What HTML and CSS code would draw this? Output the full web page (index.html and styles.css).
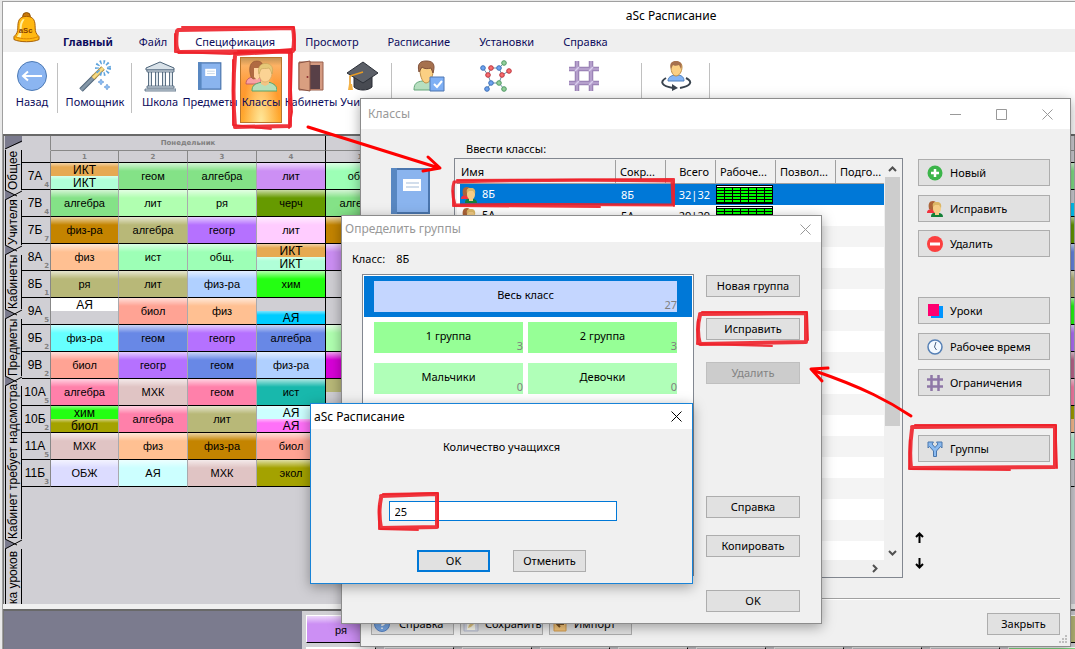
FILE: index.html
```html
<!DOCTYPE html>
<html lang="ru">
<head>
<meta charset="utf-8">
<title>aSc Расписание</title>
<link rel="stylesheet" href="styles.css">
</head>
<body>
<svg class="defs" aria-hidden="true">
  <symbol id="people" viewBox="0 0 32 32">
    <path d="M1 24c0-5 3-6 7-7.500l8 1v6.500H1z" fill="#f9a0a3" stroke="#c55f65"/>
    <path d="M6 17C3 8 5 1 12 1c6 0 7 5 7 14l-5 3-6 1z" fill="#b06a42" stroke="#8c5232" stroke-width=".6"/>
    <path d="M9 8h6v9l-3 3-3-3z" fill="#ffd3a0"/>
    <path d="M7 31c0-6 3-7 8-8.500h10c4 1.500 7 3 7 8.500z" fill="#b7dfb9" stroke="#5aa468"/>
    <path d="M16 18h8v6l-4 2-4-2z" fill="#f3c483"/>
    <path d="M14 12c0-6 3-8 6-8s7 2 7 8c0 7-4 10-7 10s-6-3-6-10z" fill="#fbd394" stroke="#d0a35f" stroke-width=".6"/>
    <path d="M14 14c-2-7 2-11 7-10.500 5 0 8 4 6 10.500-1-3-2-5-3-6-3 1-6 0-8 1z" fill="#e6c878" stroke="#c2a259" stroke-width=".6"/>
  </symbol>
  <symbol id="people-small" viewBox="0 0 16 16">
    <path d="M0 12c0-3 2-4 5-4l3 1v3z" fill="#f2323e"/>
    <path d="M2 8C1 3 2 0 6 0c4 0 4 4 3 8l-4 1z" fill="#ad6438"/>
    <path d="M4 16c0-4 2-4 4-4h4c2 0 4 1 4 4z" fill="#138038"/>
    <path d="M6 6c0-4 1-5 4-5s4 2 4 6c0 3-1 4-2 5v2H8v-2C6 10 6 9 6 6z" fill="#f5cd86"/>
    <path d="M6 6c-1-4 1-5 4-5s5 2 4 6l-2-3-4 0z" fill="#dcb766"/>
  </symbol>
  <symbol id="book" viewBox="0 0 40 46">
    <path d="M1 1h37v44H1z" fill="#8ab4ee" stroke="#4a75ad" stroke-width="2"/>
    <path d="M0 0h6v46H0z" fill="#5887c1"/>
    <path d="M12 11h18v12H12z" fill="#fff"/>
    <path d="M15 15h13M15 19h13" stroke="#a5bdd9"/>
  </symbol>
  <symbol id="hash" viewBox="0 0 30 30">
    <path d="M8 0v30M22 0v30M0 8h30M0 22h30" stroke="#957bb0" stroke-width="4.500" fill="none"/>
    <path d="M8 0v30M22 0v30M0 8h30M0 22h30" stroke="#b5a0cc" stroke-width="2.500" fill="none"/>
    <path d="M6 10l4-4M20 10l4-4M6 24l4-4M20 24l4-4" stroke="#d8ccec" stroke-width="1.500"/>
  </symbol>
  <symbol id="close" viewBox="0 0 11 11"><path d="M.5.5l10 10M10.500.5l-10 10" stroke="currentColor" fill="none"/></symbol>
  <pattern id="slots" width="8" height="3" x="1" y="3" patternUnits="userSpaceOnUse"><path d="M0 0h7v2H0z" fill="#0f0"/></pattern>
  <symbol id="grid-time" viewBox="0 0 57 19">
    <path d="M0 0h57v19H0z"/><path d="M1 1h55v1H1z" fill="#fff"/><path d="M1 3h55v15H1z" fill="url(#slots)"/>
  </symbol>
</svg>

<main class="app">
  <header class="app-title">
    <svg class="bell" viewBox="0 0 28 31"><path d="M10 4a4 4 0 0 1 8 0l-2 3h-4z" fill="#c87808" stroke="#8a4e00"/><path d="M14 4c-8 0-9 5-9 12 0 4-1 6-4 9v3c6 3 20 3 26 0v-3c-3-3-4-5-4-9 0-7-1-12-9-12z" fill="#ffb812" stroke="#a65c00"/><path d="M10 7c-2 2-3 5-3 9s-1 6-3 9l4 1c1-3 1-6 1-10 0-3 1-6 3-9z" fill="#fff0a0"/><path d="M2 25c7 3 17 3 24 0" stroke="#d98300" fill="none"/><text x="6" y="21" class="bell-text">aSc</text></svg>
    <h1>aSc Расписание</h1>
  </header>
  <nav class="tabs">
    <a href="#" class="tab main">Главный</a><a href="#" class="tab">Файл</a><a href="#" class="tab active">Спецификация</a><a href="#" class="tab">Просмотр</a><a href="#" class="tab">Расписание</a><a href="#" class="tab">Установки</a><a href="#" class="tab">Справка</a>
  </nav>
  <div class="ribbon">
    <button class="tool w44"><svg viewBox="0 0 32 32"><circle cx="16" cy="16" r="14.500" fill="#8bb5f1" stroke="#4d7ab5"/><path d="M26 16H8M12 11.500L7 16l5 4.500" stroke="#fff" stroke-width="2" fill="none"/></svg>Назад</button>
    <span class="sep"></span>
    <button class="tool w66"><svg viewBox="0 0 32 32"><path d="M2 30L16 16" stroke="#4f6478" stroke-width="5"/><path d="M2 30L16 16" stroke="#8497a8" stroke-width="3"/><path d="M14 18l10-10" stroke="#aa8d42" stroke-width="5"/><path d="M14 18l10-10" stroke="#f8db83" stroke-width="3"/><circle cx="24" cy="8" r="6" fill="none" stroke="#5da3dd" stroke-width="4" stroke-dasharray="1.500 2"/><path d="M22 19l1 2 2 1-2 1-1 2-1-2-2-1 2-1zM28 24l1 2 2 1-2 1-1 2-1-2-2-1 2-1z" fill="#8bbcf3" stroke="#4f87ca" stroke-width=".5"/></svg>Помощник</button>
    <span class="sep"></span>
    <button class="tool w48"><svg viewBox="0 0 32 32"><path d="M2 8l14-6 14 6v2H2z" fill="#d9e2e9" stroke="#4c6378"/><path d="M6 12v14M13 12v14M20 12v14M27 12v14" stroke="#5b7084" stroke-width="4"/><path d="M6 12v14M13 12v14M20 12v14M27 12v14" stroke="#dfe7ed" stroke-width="2"/><path d="M3 10h27v2H3zM3 26h27v2H3zM1 29h31v2H1z" fill="#d7e0e7" stroke="#4c6378" stroke-width=".8"/></svg>Школа</button>
    <button class="tool w52"><svg viewBox="0 0 32 32"><use href="#book" x="4" y="2" width="24" height="28"/></svg>Предметы</button>
    <button class="tool w50 chosen"><svg viewBox="0 0 32 32"><use href="#people" width="32" height="32"/></svg>Классы</button>
    <button class="tool w50"><svg viewBox="0 0 32 32"><path d="M4 2h24v28H4z" fill="#d49a81" stroke="#9a604d"/><path d="M8 5h17v24H8z" fill="#584047"/><path d="M4 3l11-2v30L4 29z" fill="#d99f80" stroke="#8a5544"/><circle cx="12.500" cy="17" r="1" fill="#8c2d30"/></svg>Кабинеты</button>
    <button class="tool w52"><svg viewBox="0 0 32 32"><path d="M8 15h18v12c-4 4-14 4-18 0z" fill="#484b52" stroke="#292c34"/><path d="M1 13L17 2l15 11-15 10z" fill="#5c6068" stroke="#2c3038"/><path d="M17 12L4 16v10" fill="none" stroke="#e79b23" stroke-width="1.500"/><path d="M3 24h3l1 6H2z" fill="#f5b244"/></svg>Учителя</button>
    <span class="sep"></span>
    <button class="tool w66" aria-label="Ученики"><svg viewBox="0 0 32 32"><path d="M1 30c0-7 3-8 8-9h8c4 1 7 3 7 9z" fill="#b7dfc0" stroke="#66a77b"/><path d="M7 10c0-6 3-7 6-7s7 1 7 8c0 7-4 12-7 12s-6-6-6-13z" fill="#fbd083" stroke="#bf9048"/><path d="M6 12C4 4 7 1 13 1s10 2 7 12l-2-5c-3 1-7 1-9-1z" fill="#a6714e" stroke="#81513b"/><path d="M17 17h14v14H17z" fill="#7fb0f5" stroke="#5078b4"/><path d="M21 24l3 3 5-6" stroke="#fff" stroke-width="2" fill="none"/></svg></button>
    <button class="tool w68" aria-label="Связи"><svg viewBox="0 0 32 32"><path d="M3 8l5 7 3 8-4 6M8 15l3-7M19 8l5-5M19 8l3 7 7-4M22 15l-3 8 5 6M11 23h8M11 8h8" stroke="#6990a6" fill="none"/><g fill="#6ea4f0" stroke="#3e70b8"><circle cx="3" cy="8" r="2.300"/><circle cx="19" cy="8" r="2.300"/><circle cx="11" cy="23" r="2.300"/><circle cx="7" cy="29" r="2.300"/></g><g fill="#f66d6d" stroke="#bd333e"><circle cx="11" cy="8" r="2.300"/><circle cx="8" cy="15" r="2.300"/><circle cx="22" cy="15" r="2.300"/><circle cx="29" cy="11" r="2.300"/></g><g fill="#94cf9b" stroke="#509a65"><circle cx="24" cy="3" r="2.300"/><circle cx="19" cy="23" r="2.300"/><circle cx="24" cy="29" r="2.300"/></g></svg></button>
    <button class="tool w110" aria-label="Сетка"><svg viewBox="0 0 32 32"><use href="#hash" x="1" y="1" width="30" height="30"/></svg></button>
    <span class="sep"></span>
    <button class="tool w60" aria-label="Обмен"><svg viewBox="0 0 32 32"><path d="M8 21c0-4 3-5 6-6h5c3 1 5 2 5 6z" fill="#84b5f5" stroke="#4f7fbc"/><path d="M11 7c0-5 3-5 5-5s6 0 6 5c0 5-3 9-6 9s-5-4-5-9z" fill="#fbd083" stroke="#bf9048"/><path d="M11 9C9 3 12 1 16 1s7 2 5 8l-2-4c-2 1-5 1-6 0z" fill="#a6714e"/><path d="M6 18c-7 4-4 8 7 10M26 18c8 4 4 8-6 10" fill="none" stroke="#39434e" stroke-width="2"/><path d="M12 24l6 4-6 3z" fill="#39434e"/></svg></button>
    <span class="sep"></span>
  </div>

  <section class="workspace">
    <div class="side-tabs">
      <svg class="notch first" viewBox="0 0 18 14"><path d="M0 0h17v6L0 13z"/><path d="M17 5L0 13" class="edge"/></svg>
      <button class="side-tab s1">Общее</button>
      <svg class="notch" viewBox="0 0 18 10"><path d="M0 0l10 5-10 5z"/><path d="M0 0l12 6M0 10L17 1" class="edge"/></svg>
      <button class="side-tab s2">Учителя</button>
      <svg class="notch" viewBox="0 0 18 10"><path d="M0 0l10 5-10 5z"/><path d="M0 0l12 6M0 10L17 1" class="edge"/></svg>
      <button class="side-tab s3">Кабинеты</button>
      <svg class="notch" viewBox="0 0 18 10"><path d="M0 0l10 5-10 5z"/><path d="M0 0l12 6M0 10L17 1" class="edge"/></svg>
      <button class="side-tab s4">Предметы</button>
      <svg class="notch" viewBox="0 0 18 10"><path d="M0 0l10 5-10 5z"/><path d="M0 0l12 6M0 10L17 1" class="edge"/></svg>
      <button class="side-tab s5">Кабинет требует надсмотра</button>
      <svg class="notch" viewBox="0 0 18 10"><path d="M0 0l10 5-10 5z"/><path d="M0 0l12 6M0 10L17 1" class="edge"/></svg>
      <button class="side-tab s6">ка уроков</button>
    </div>
    <table class="plan">
      <colgroup><col class="c-head"><col class="c-first"><col class="c-slot"><col class="c-slot"><col class="c-slot"><col class="c-slot"><col><col class="c-last"></colgroup>
      <thead>
        <tr class="days"><th></th><th colspan="4" class="day-end">Понедельник</th><th></th><th></th><th></th></tr>
        <tr class="nums"><th></th><th>1</th><th>2</th><th>3</th><th class="day-end">4</th><th>1</th><th></th><th></th></tr>
      </thead>
      <tbody>
        <tr><th>7А<small>4</small></th><td><div class="half orange">ИКТ</div><div class="half mint">ИКТ</div></td><td class="green">геом</td><td class="green">алгебра</td><td class="lilac day-end">лит</td><td class="jade">общ.</td><td></td><td class="green"></td></tr>
        <tr><th>7В<small>4</small></th><td class="green">алгебра</td><td class="lime">лит</td><td class="lime">ря</td><td class="moss day-end">черч</td><td class="green">алгебра</td><td></td><td><div class="half"></div><div class="half azure"></div></td></tr>
        <tr><th>7Б<small>7</small></th><td class="brown">физ-ра</td><td class="olive">алгебра</td><td class="violet">геогр</td><td class="rose day-end">лит</td><td class="brown"></td><td></td><td class="moss"></td></tr>
        <tr><th>8А<small>2</small></th><td class="peach">физ</td><td class="jade">ист</td><td class="jade">общ.</td><td class="day-end"><div class="half orange">ИКТ</div><div class="half mint">ИКТ</div></td><td class="lilac"></td><td></td><td class="blue"></td></tr>
        <tr><th>8Б<small>1</small></th><td class="olive">ря</td><td class="olive">лит</td><td class="sky">физ-ра</td><td class="neon day-end">хим</td><td></td><td></td><td class="olive"></td></tr>
        <tr><th>9А<small>5</small></th><td><div class="half white">АЯ</div><div class="half"></div></td><td class="salmon">биол</td><td class="peach">физ</td><td class="day-end"><div class="half"></div><div class="half azure">АЯ</div></td><td></td><td></td><td class="neon"></td></tr>
        <tr><th>9Б<small>2</small></th><td class="cyan">физ-ра</td><td class="blue">геом</td><td class="violet">геогр</td><td class="blue day-end">алгебра</td><td class="lime"></td><td></td><td class="violet"></td></tr>
        <tr><th>9В<small>2</small></th><td class="salmon">биол</td><td class="violet">геогр</td><td class="blue">геом</td><td class="sky day-end">физ-ра</td><td class="magenta"></td><td></td><td class="mauve"></td></tr>
        <tr><th>10А<small>5</small></th><td class="pink">алгебра</td><td class="dusty">МХК</td><td class="pink">геом</td><td class="teal day-end">ист</td><td><div class="half olive"></div><div class="half"></div></td><td></td><td class="pink"></td></tr>
        <tr><th>10Б<small>2</small></th><td><div class="half neon">хим</div><div class="half mustard">биол</div></td><td class="pink">алгебра</td><td class="olive">лит</td><td class="day-end"><div class="half ice">АЯ</div><div class="half fuchsia">АЯ</div></td><td></td><td></td><td><div class="half mustard"></div><div class="half peach"></div></td></tr>
        <tr><th>11А<small>5</small></th><td class="dusty">МХК</td><td class="peach">физ</td><td class="brown">физ-ра</td><td class="salmon day-end">биол</td><td></td><td></td><td class="mint"></td></tr>
        <tr><th>11Б<small>3</small></th><td class="lavender">ОБЖ</td><td class="ice">АЯ</td><td class="dusty">МХК</td><td class="mustard day-end">экол</td><td></td><td></td><td></td></tr>
      </tbody>
    </table>
  </section>

  <footer class="tray">
    <div class="tray-info"></div>
    <div class="cards">
      <div class="card lilac">ря</div><div class="card"></div><div class="card"></div><div class="card"></div><div class="card"></div><div class="card"></div><div class="card"></div><div class="card"></div><div class="card"></div><div class="card olive"></div>
      <div class="card white"></div><div class="card"></div><div class="card"></div><div class="card"></div><div class="card pale"></div><div class="card"></div><div class="card pale"></div><div class="card"></div><div class="card"></div><div class="card green"></div>
    </div>
  </footer>
</main>

<section class="window classes">
  <header class="caption wide"><h2>Классы</h2>
    <button aria-label="Свернуть"><svg viewBox="0 0 11 11"><path d="M0 5.500h11" stroke="currentColor"/></svg></button>
    <button aria-label="Развернуть"><svg viewBox="0 0 11 11"><path d="M.5.5h10v10H.5z" fill="none" stroke="currentColor"/></svg></button>
    <button aria-label="Закрыть окно"><svg><use href="#close"/></svg></button>
  </header>
  <div class="classes-body">
    <svg class="big-book" viewBox="0 0 40 46"><use href="#book" width="40" height="46"/></svg>
    <div class="list-area">
      <p class="list-label">Ввести классы:</p>
      <div class="list">
        <div class="list-rows">
          <table class="class-table">
            <colgroup><col class="k-pad"><col class="k-name"><col class="k-mid"><col class="k-mid"><col class="k-wide"><col class="k-wide"><col></colgroup>
            <thead><tr><th colspan="2">Имя</th><th>Сокр...</th><th class="num">Всего</th><th>Рабоче...</th><th>Позвол...</th><th class="tail">Подго...</th></tr></thead>
            <tbody>
              <tr class="selected"><td></td><td><svg class="ico16"><use href="#people-small"/></svg>8Б</td><td class="pad">8Б</td><td class="num">32|32</td><td><svg class="slots"><use href="#grid-time"/></svg></td><td></td><td></td></tr>
              <tr><td></td><td><svg class="ico16"><use href="#people-small"/></svg>5А</td><td class="pad">5А</td><td class="num">29|29</td><td><svg class="slots"><use href="#grid-time"/></svg></td><td></td><td></td></tr>
            </tbody>
          </table>
        </div>
        <div class="vbar"><svg viewBox="0 0 9 6"><path d="M1 5l3.500-3.500L8 5"/></svg><span class="thumb"></span><svg viewBox="0 0 9 6"><path d="M1 1l3.500 3.500L8 1"/></svg></div>
        <div class="hbar"><svg viewBox="0 0 6 9"><path d="M1 1l3.500 3.500L1 8"/></svg></div>
      </div>
    </div>
    <div class="commands">
      <button class="btn cmd"><svg viewBox="0 0 16 16"><circle cx="8" cy="8" r="7.500" fill="#3cb54a"/><path d="M8 4v8M4 8h8" stroke="#fff" stroke-width="2.500"/></svg>Новый</button>
      <button class="btn cmd"><svg><use href="#people-small"/></svg>Исправить</button>
      <button class="btn cmd gap-s"><svg viewBox="0 0 16 16"><circle cx="8" cy="8" r="8" fill="#fb3f3f"/><path d="M3 8h10" stroke="#fff" stroke-width="3"/></svg>Удалить</button>
      <button class="btn cmd gap-l"><svg viewBox="0 0 16 16"><path d="M4 3h12v12H4z" fill="#0095ff"/><path d="M1 1h11v12H1z" fill="#ff0070"/></svg>Уроки</button>
      <button class="btn cmd"><svg viewBox="0 0 16 16"><circle cx="8" cy="8" r="7" fill="#f3f9ff" stroke="#5680b5" stroke-width="1.500"/><path d="M9 3L7.500 8l2 3" fill="none" stroke="#4b6383"/></svg>Рабочее время</button>
      <button class="btn cmd"><svg viewBox="0 0 16 16"><path d="M4.500 0v16M11.500 0v16M0 4.500h16M0 11.500h16" stroke="#8e77a7" stroke-width="2.500"/></svg>Ограничения</button>
      <button class="btn cmd gap-m"><svg viewBox="0 0 16 16"><path d="M6.500 15.500V10L2.500 5.500 1 7V1h5.500L5 3l3 3.500L11 3 9.500 1H15v6l-1.500-1.500L9.500 10v5.500z" fill="#8abaf0" stroke="#4a76ab"/></svg>Группы</button>
      <button class="move up" aria-label="Вверх"><svg viewBox="0 0 9 11"><path d="M4.500 11V1M1 5l3.500-3.500L8 5"/></svg></button>
      <button class="move" aria-label="Вниз"><svg viewBox="0 0 9 11"><path d="M4.500 0v10M1 6l3.500 3.500L8 6"/></svg></button>
    </div>
  </div>
  <footer class="classes-foot">
    <button class="btn foot"><svg viewBox="0 0 16 16"><circle cx="8" cy="8" r="7.500" fill="#79a9e8" stroke="#5683c3"/><path d="M5.500 6a2.500 2.500 0 1 1 2.500 3v1M8 11.500v1.500" stroke="#fff" stroke-width="1.500" fill="none"/></svg>Справка</button>
    <button class="btn foot"><svg viewBox="0 0 16 16"><path d="M1 1h14v14H1z" fill="#d8dbe9" stroke="#b6bacb"/><path d="M4 3h8v11H4z" fill="#fffef0"/><path d="M5 12l1-3 5-5 2 2-5 5z" fill="#e5c985"/></svg>Сохранить</button>
    <button class="btn foot"><svg viewBox="0 0 16 16"><path d="M2 3h12v12H2z" fill="#f6c77c" stroke="#d49d50"/><path d="M12 8H5m3-3L5 8l3 3" stroke="#795226" stroke-width="2" fill="none"/></svg>Импорт</button>
    <button class="btn last">Закрыть</button>
    <svg class="grip" viewBox="0 0 9 9"><path d="M6 0h2v2H6zM3 3h2v2H3zM6 3h2v2H6zM0 6h2v2H0zM3 6h2v2H3zM6 6h2v2H6z"/></svg>
  </footer>
</section>

<section class="window groups">
  <header class="caption"><h2>Определить группы</h2><button aria-label="Закрыть группы"><svg><use href="#close"/></svg></button></header>
  <div class="groups-body">
    <p class="class-line"><span>Класс:</span><span>8Б</span></p>
    <div class="group-list">
      <div class="group-row current"><div class="group whole">Весь класс<small>27</small></div></div>
      <div class="group-row"><div class="group halfset">1 группа<small>3</small></div><div class="group halfset">2 группа<small>3</small></div></div>
      <div class="group-row"><div class="group gender">Мальчики<small>0</small></div><div class="group gender">Девочки<small>0</small></div></div>
    </div>
    <div class="group-buttons">
      <button class="btn">Новая группа</button><button class="btn">Исправить</button><button class="btn remove" disabled>Удалить</button>
      <button class="btn help">Справка</button><button class="btn copy">Копировать</button><button class="btn done">OK</button>
    </div>
  </div>
</section>

<section class="window prompt">
  <header class="caption"><h2>aSc Расписание</h2><button aria-label="Закрыть запрос"><svg><use href="#close"/></svg></button></header>
  <form class="prompt-body">
    <label for="count">Количество учащихся</label>
    <input id="count" type="text" value="25">
    <div class="prompt-buttons"><button type="button" class="btn default">OK</button><button type="button" class="btn">Отменить</button></div>
  </form>
</section>

<svg class="marks" viewBox="0 0 1075 649" aria-hidden="true">
  <g class="rough">
    <path d="M178 30L293 28Q295 40 293 51L179 52Q175 48 177 31"/><path class="thin" d="M182 27L294 27L295 50M175 34V52L230 54L292 49"/>
    <path d="M235 54L290 51L290 126L235 127Q232 90 235 56"/><path class="thin" d="M238 51L292 53L291 90L292 112L289 128M233 60L233 125L271 129"/>
    <path class="w3" d="M454 182Q560 179 672 181L673 205Q560 204 455 205Q451 192 454 182"/><path class="thin" d="M457 180L674 179L674 206M453 191V206L600 207"/>
    <path d="M700 314L806 313L806 342L700 344Q696 330 700 315"/><path class="thin" d="M702 312L807 312L808 340M698 320L697 344L772 346"/>
    <path d="M912 427L1055 426L1055 467L911 468Q909 450 912 429"/><path class="thin" d="M915 425L1056 425L1056 440L1057 468M910 440L909 469L1010 470"/>
    <path d="M381 496L437 494L437 527L381 528Q378 512 381 498"/><path class="thin" d="M383 494L438 493L438 527M379 506V529L418 530"/>
  </g>
  <g class="arrows"><path d="M308 127L439 168M428 157L440 168L423 171"/><path d="M911 416C890 402 865 388 812 370M828 368L811 369L822 381"/></g>
</svg>
</body>
</html>
```

FILE: styles.css
```css
* { box-sizing: border-box; }
html, body { height: 100%; }
body {
  margin: 0;
  overflow: hidden;
  position: relative;
  background: #e9e9e9;
  font: 11px/16px "Noto Sans", "DejaVu Sans", sans-serif;
  color: #000;
  padding: 1px 0 0 2px;
}
h1, h2, p { margin: 0; font-weight: 400; }
button, input { font: inherit; color: inherit; }
button { padding: 0; border: 0; background: none; }
a { color: inherit; text-decoration: none; }
.defs { position: absolute; width: 0; height: 0; }

/* Main window */
.app {
  height: 100%;
  display: flex;
  flex-direction: column;
  overflow: hidden;
  background: #fff;
  border: 1px solid #a0a0a0;
  border-width: 1px 0 0 1px;
}
.app-title { flex: none; height: 27px; padding-left: 264px; text-align: center; position: relative; }
.app-title h1 { font-size: 12px; line-height: 28px; }
.bell { position: absolute; left: 10px; top: 10px; width: 27px; height: 31px; z-index: 1; }
.bell-text { font: bold 8px "Liberation Sans", sans-serif; fill: #8a4000; }
.tabs { flex: none; display: flex; height: 23px; padding-left: 46px; background: #efefef; color: #0c0c5c; }
.tab { padding: 0 14px; line-height: 25px; }
.tab.main { font-weight: 700; padding-right: 12px; }
.tab.active { padding: 0 18px; margin: 0 -4px; background: #fff; }
.tab.active ~ .tab { padding: 0 13px 0 16px; }
.ribbon { flex: none; height: 82px; display: flex; padding: 5px 0 0 7px; color: #0c0c5c; }
.tool {
  flex: none;
  height: 66px;
  display: flex;
  flex-direction: column;
  align-items: center;
  gap: 2px;
  padding-top: 3px;
  white-space: nowrap;
  overflow: visible;
}
.tool svg { flex: none; width: 32px; height: 32px; }
.tool.chosen {
  width: 42px;
  margin: 0 4px;
  border: 1px solid #b9772d;
  padding-top: 2px;
  background: radial-gradient(ellipse at 50% 100%, #ffe89b, transparent 65%), linear-gradient(#c49455, #fdb264 12%, #ff9b38 40%, #ff9a2c 60%, #ffab2e);
}
.w44 { width: 44px; }
.w48 { width: 48px; }
.w50 { width: 50px; }
.w52 { width: 52px; }
.w60 { width: 60px; }
.w66 { width: 66px; }
.w68 { width: 68px; }
.w110 { width: 108px; }
.sep { flex: none; width: 8px; height: 50px; margin-top: 6px; background: linear-gradient(#c0c0c0, #c0c0c0) 3px 0 / 1px 100% no-repeat; }

.workspace { flex: 1; min-height: 0; display: flex; border-top: 2px solid #696969; background: #d0cfd4; overflow: hidden; font-family: "Liberation Sans", sans-serif; }
.side-tabs { flex: none; width: 19px; padding-left: 1px; display: flex; flex-direction: column; border-left: 1px solid #777; }
.side-tab {
  flex: none;
  width: 17px;
  border: 1px solid #000;
  border-width: 0 1px;
  writing-mode: vertical-rl;
  transform: rotate(180deg);
  font-size: 12px;
  line-height: 15px;
  text-align: center;
  white-space: nowrap;
}
.s1 { height: 40px; }
.s2 { height: 45px; }
.s3 { height: 54px; }
.s4 { height: 57px; }
.s5 { height: 153px; }
.s6 { height: 57px; }
.notch { flex: none; width: 18px; height: 10px; fill: #7b7b8e; }
.notch.first { height: 14px; }
.notch .edge { fill: none; stroke: #000; stroke-width: 1; }

.plan { flex: 1; align-self: flex-start; table-layout: fixed; border-collapse: separate; border-spacing: 0; font-size: 11px; line-height: 13px; }
.c-head { width: 29px; }
.c-first { width: 68px; }
.c-slot { width: 69px; }
.c-last { width: 60px; }
.plan th, .plan td { padding: 0; text-align: center; white-space: nowrap; overflow: hidden; border-right: 1px solid #a9a9ad; border-bottom: 1px solid #000; }
.plan .day-end { border-right-color: #000; }
.plan thead th { font: bold 7px/10px "DejaVu Sans", sans-serif; color: #808080; border-right-color: #888; }
.plan thead .day-end { border-right-color: #000; }
.days { height: 15px; }
.days th { border-bottom-color: #888; }
.plan .days th:first-child { border-bottom-color: transparent; }
.nums { height: 12px; }
.plan tbody tr { height: 27px; }
.plan tbody th { position: relative; font-weight: 400; font-size: 12px; border-right-color: #888; padding-right: 2px; }
.plan tbody th small { position: absolute; right: 1px; bottom: 0; font: bold 7px/8px "DejaVu Sans", sans-serif; color: #808080; }
.plan tbody td { padding-top: 1px; }
.plan tbody td:has(.half) { padding-top: 0; }
.half { height: 13px; font-size: 12px; line-height: 15px; }
.plan td, .card { background-image: linear-gradient(rgba(255, 255, 255, .65), rgba(255, 255, 255, 0) 8px); }
.half { background-image: linear-gradient(rgba(255, 255, 255, .5), rgba(255, 255, 255, 0) 4px); }
.plan td:not([class]), .plan td.day-end:has(.half), .half:empty, .card:empty { background-image: none; }

.orange { background-color: #e6a952; }
.mint { background-color: #b0ffd8; }
.green { background-color: #84e287; }
.lilac { background-color: #cc8ff4; }
.jade { background-color: #9dffb6; }
.lime { background-color: #b0ffb0; }
.moss { background-color: #669a00; }
.brown { background-color: #c48400; }
.olive { background-color: #b8b878; }
.violet { background-color: #b571ff; }
.rose { background-color: #ffccff; }
.peach { background-color: #ffc092; }
.sky { background-color: #b0d0ff; }
.neon { background-color: #24ff12; }
.white { background-color: #fff; }
.salmon { background-color: #ffa394; }
.azure { background-color: #00ccff; }
.cyan { background-color: #66ffff; }
.blue { background-color: #6888e6; }
.magenta { background-color: #d800d8; }
.mauve { background-color: #c06890; }
.pink { background-color: #ff80aa; }
.dusty { background-color: #e0c4c4; }
.teal { background-color: #18b8ac; }
.mustard { background-color: #a4a200; }
.ice { background-color: #ccffff; }
.fuchsia { background-color: #ff70f8; }
.lavender { background-color: #dcdcff; }
.pale { background-color: #e0e0e0; }

.tray { flex: none; height: 45px; border-top: 5px solid #f0f0f0; display: flex; overflow: hidden; background: #d0cfd4; font-family: "Liberation Sans", sans-serif; box-shadow: inset 0 2px #696969; }
.tray-info { flex: none; width: 299px; border-top: 2px solid #696969; border-left: 1px solid #777; background: #7b7b8e; }
.cards { flex: none; display: grid; grid-template-columns: repeat(10, 70px); gap: 4px 8px; grid-auto-rows: 28px; padding: 6px 0 0 4px; }
.card { border: 1px solid #fff; border-right-color: #000; border-bottom-color: #000; text-align: center; line-height: 28px; }

/* Dialog windows */
.window { position: absolute; display: flex; flex-direction: column; background: #f0f0f0; border: 1px solid #8c8c8c; box-shadow: 0 3px 12px rgba(0, 0, 0, .35); }
.caption { flex: none; display: flex; align-items: center; height: 26px; background: #fff; color: #999; }
.caption h2 { flex: 1; font-size: 12px; padding-left: 3px; }
.caption button { width: 32px; height: 100%; display: flex; align-items: center; justify-content: center; }
.caption svg { width: 11px; height: 11px; }
.caption.wide { height: 30px; }
.caption.wide h2 { padding-left: 7px; }
.caption.wide button { width: 46px; }
.btn { display: flex; align-items: center; justify-content: center; height: 22px; border: 1px solid #adadad; background: #e1e1e1; white-space: nowrap; }
.btn:disabled { background: #ccc; border-color: #bfbfbf; color: #838383; }
.btn svg { flex: none; width: 16px; height: 16px; }

.classes { left: 360px; top: 98px; width: 711px; height: 549px; }
.classes-body { flex: 1; min-height: 0; display: grid; grid-template-columns: 93px 1fr 132px; padding-right: 20px; }
.big-book { width: 40px; height: 46px; margin: 39px 0 0 30px; }
.list-area { display: flex; flex-direction: column; margin-right: 15px; min-width: 0; }
.list-label { padding: 12px 0 1px 12px; }
.list { flex: 1; display: grid; grid-template: 1fr 16px / 1fr 17px; margin-bottom: 20px; padding: 1px; border: 1px solid #828790; background: #f0f0f0; }
.list-rows { margin-left: 1px; min-width: 0; overflow: hidden; background: repeating-linear-gradient(#fff 0 21px, #f4f4f4 21px 42px) 0 3px; }
.class-table { width: 100%; table-layout: fixed; border-spacing: 0; }
.k-pad { width: 3px; }
.k-name { width: 156px; }
.k-mid { width: 50px; }
.k-wide { width: 60px; }
.class-table th, .class-table td { padding: 0; text-align: left; font-weight: 400; white-space: nowrap; overflow: hidden; }
.class-table th { height: 24px; padding-left: 4px; background: #f0f0f0; border-right: 1px solid #a0a0a0; border-bottom: 1px solid #a0a0a0; }
.class-table th.tail { border-right: 0; }
.class-table td { height: 21px; background: #fff; }
.class-table td.pad { padding-left: 5px; }
.class-table .num { text-align: right; padding: 0 6px 0 0; }
.class-table .selected td { background: #0078d7; color: #fff; }
.class-table .selected td:first-child { background: #fff; }
.ico16 { width: 16px; height: 16px; margin: 0 5px 0 1px; vertical-align: middle; }
.slots { display: block; width: 57px; height: 19px; }
.vbar { display: flex; flex-direction: column; align-items: center; padding: 6px 0 4px; gap: 5px; }
.vbar svg { flex: none; width: 9px; height: 6px; }
.vbar svg, .hbar svg { fill: none; stroke: #505050; stroke-width: 2; }
.vbar svg:last-child { margin-top: auto; }
.thumb { width: 15px; height: 249px; background: #cdcdcd; }
.hbar { display: flex; align-items: center; justify-content: flex-end; padding-right: 6px; }
.hbar svg { width: 6px; height: 9px; }
.commands { padding-top: 30px; display: flex; flex-direction: column; gap: 9px; }
.cmd { height: 27px; justify-content: flex-start; gap: 7px; padding-left: 8px; }
.cmd.gap-s { margin-top: -1px; }
.cmd.gap-l { margin-top: 31px; }
.cmd.gap-m { margin-top: 30px; }
.move { width: 9px; height: 11px; margin: 0 0 6px -3px; display: flex; }
.move.up { margin-top: 61px; }
.move svg { width: 9px; height: 11px; fill: none; stroke: #000; stroke-width: 2; }
.classes-foot { flex: none; display: flex; gap: 6px; margin: 0 10px; padding: 14px 0 11px; border-top: 1px solid #a0a0a0; box-shadow: inset 0 1px #fff; position: relative; }
.foot { width: 83px; gap: 6px; justify-content: flex-start; padding-left: 2px; }
.foot:first-child { gap: 9px; }
.last { width: 73px; margin-left: auto; }
.grip { position: absolute; right: -8px; bottom: 2px; width: 9px; height: 9px; fill: #bfbfbf; }

.groups { left: 341px; top: 215px; width: 481px; height: 409px; }
.groups-body { flex: 1; display: grid; grid-template: 32px 1fr / 332px 94px; column-gap: 12px; padding: 0 20px; }
.class-line { grid-column: 1 / -1; display: flex; gap: 11px; margin: 9px 0 0 -10px; }
.group-list { margin-bottom: 47px; padding: 1px; border: 1px solid #828790; background: #fff; }
.group-row { display: flex; gap: 5px; padding: 5px 15px 5px 10px; }
.group { flex: 1; height: 31px; position: relative; text-align: center; line-height: 28px; }
.group small { position: absolute; right: 0; bottom: 0; font-size: 11px; line-height: 14px; color: #808080; }
.current { background: #0078d7; }
.whole { background: #c4d6ff; }
.halfset { background: #96ff96; }
.gender { background: #b0ffb8; }
.group-buttons { display: flex; flex-direction: column; gap: 21px; padding-top: 1px; }
.remove { margin-top: 1px; }
.help { margin-top: 91px; }
.copy { margin-top: -4px; }
.done { margin-top: 12px; }

.prompt { left: 310px; top: 403px; width: 383px; height: 181px; border-color: #1883d7; }
.prompt .caption { height: 25px; color: #000; }
.prompt-body { flex: 1; display: flex; flex-direction: column; align-items: center; padding-top: 10px; }
.prompt-body input { width: 228px; height: 20px; margin: 46px 0 29px 2px; padding: 0 5px; border: 1px solid #0078d7; background: #fff; }
.prompt-buttons { display: flex; gap: 23px; }
.prompt-buttons .btn { width: 73px; }
.btn.default { border: 2px solid #0078d7; }

/* Hand-drawn highlights and arrows */
.marks { position: absolute; left: 0; top: 0; width: 1075px; height: 649px; pointer-events: none; fill: none; stroke-linecap: round; stroke-linejoin: round; }
.rough path { stroke: #ee2029; stroke-width: 4; opacity: .9; }
.rough .thin { stroke-width: 2; }
.rough .w3 { stroke-width: 3; }
.arrows path { stroke: #f00; stroke-width: 3; }
```
